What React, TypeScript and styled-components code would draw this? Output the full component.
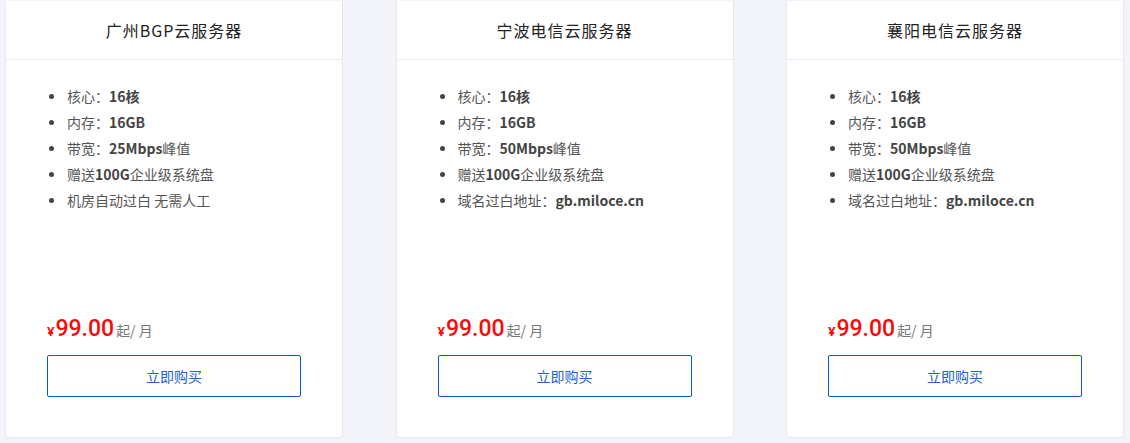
import React from "react";
import styled, { createGlobalStyle } from "styled-components";

const Global = createGlobalStyle`
  html, body {
    margin: 0;
    padding: 0;
    background: #f3f4f9;
    font-family: "Noto Sans", "Noto Sans CJK SC", sans-serif;
  }
`;

const Page = styled.div`
  display: flex;
  gap: 52.5px;
  padding: 1px 6px 0 5px;
  width: 1130px;
  box-sizing: border-box;
`;

const Card = styled.div`
  width: 338px;
  height: 437px;
  box-sizing: border-box;
  background: #fff;
  border: 1px solid #e6e8f2;
  border-top: none;
  border-radius: 0 0 4px 4px;
  display: flex;
  flex-direction: column;
`;

const Header = styled.div`
  height: 58px;
  display: flex;
  align-items: center;
  justify-content: center;
  border-bottom: 1px solid #ececf2;
  box-shadow: 1px 0 0 #e4e5ec;
  font-size: 16px;
  letter-spacing: 1px;
  color: #222;
  font-family: "Noto Sans CJK SC", sans-serif;
`;

const Body = styled.div`
  flex: 1;
  display: flex;
  flex-direction: column;
  padding: 23px 41px 40px 41px;
`;

const List = styled.ul`
  margin: 0;
  padding: 0;
  list-style: none;
  font-size: 14px;
  line-height: 26px;
  color: #555;
  font-family: "Noto Sans CJK SC", sans-serif;
`;

const Row = styled.li`
  display: flex;
  align-items: center;

  &::before {
    content: "";
    width: 5px;
    height: 5px;
    border-radius: 50%;
    background: #444;
    margin: 0 13px 0 2px;
    flex: none;
  }
`;

const Strong = styled.b`
  font-weight: 700;
  color: #444;
`;

const Price = styled.div`
  margin-top: auto;
  display: flex;
  align-items: baseline;
  color: #f50b0b;
`;

const Yen = styled.span`
  font-size: 13px;
  font-weight: 700;
  margin-right: 1px;
`;

const Amount = styled.span`
  font-family: "Roboto", sans-serif;
  font-size: 23px;
  font-weight: 500;
`;

const Unit = styled.span`
  margin-left: 2px;
  font-size: 14px;
  color: #777;
  font-family: "Noto Sans CJK SC", sans-serif;
`;

const Buy = styled.button`
  margin-top: 13px;
  width: 254px;
  height: 42px;
  background: #fff;
  border: 1px solid #0b57d8;
  border-radius: 2px;
  color: #1e62d6;
  font-size: 14px;
  font-family: "Noto Sans CJK SC", sans-serif;
  cursor: pointer;
`;

type Item = { label: string; value?: string; tail?: string };

const plans: { title: string; items: Item[] }[] = [
  {
    title: "广州BGP云服务器",
    items: [
      { label: "核心：", value: "16核" },
      { label: "内存：", value: "16GB" },
      { label: "带宽：", value: "25Mbps", tail: "峰值" },
      { label: "赠送", value: "100G", tail: "企业级系统盘" },
      { label: "机房自动过白 无需人工" },
    ],
  },
  {
    title: "宁波电信云服务器",
    items: [
      { label: "核心：", value: "16核" },
      { label: "内存：", value: "16GB" },
      { label: "带宽：", value: "50Mbps", tail: "峰值" },
      { label: "赠送", value: "100G", tail: "企业级系统盘" },
      { label: "域名过白地址：", value: "gb.miloce.cn" },
    ],
  },
  {
    title: "襄阳电信云服务器",
    items: [
      { label: "核心：", value: "16核" },
      { label: "内存：", value: "16GB" },
      { label: "带宽：", value: "50Mbps", tail: "峰值" },
      { label: "赠送", value: "100G", tail: "企业级系统盘" },
      { label: "域名过白地址：", value: "gb.miloce.cn" },
    ],
  },
];

function App() {
  return (
    <>
      <Global />
      <Page>
        {plans.map((p) => (
          <Card key={p.title}>
            <Header>{p.title}</Header>
            <Body>
              <List>
                {p.items.map((it, i) => (
                  <Row key={i}>
                    <span>
                      {it.label}
                      {it.value && <Strong>{it.value}</Strong>}
                      {it.tail}
                    </span>
                  </Row>
                ))}
              </List>
              <Price>
                <Yen>¥</Yen>
                <Amount>99.00</Amount>
                <Unit>起/ 月</Unit>
              </Price>
              <Buy>立即购买</Buy>
            </Body>
          </Card>
        ))}
      </Page>
    </>
  );
}

export default App;
